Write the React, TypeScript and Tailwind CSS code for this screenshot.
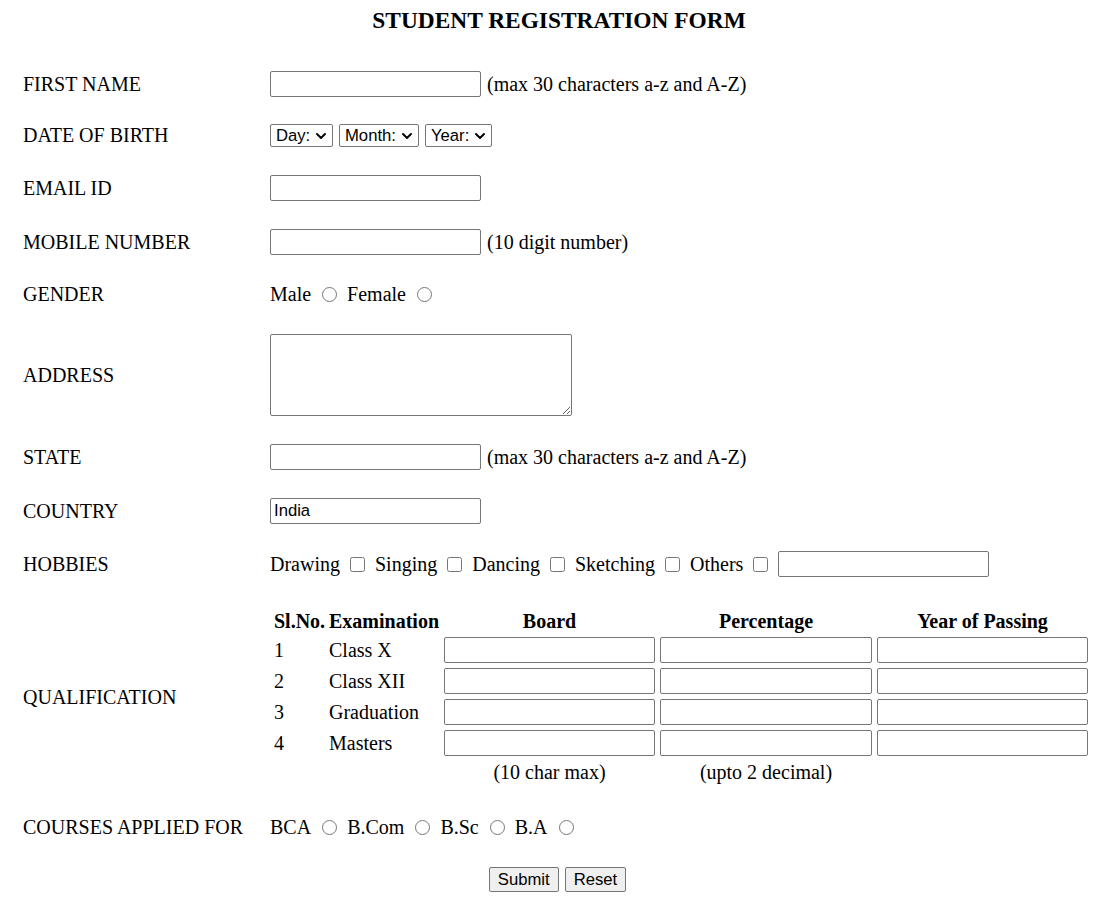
import React from "react";

const inp =
  "h-[26px] w-[211px] border border-[#767676] rounded-[2px] bg-white px-[3px] text-[16.67px] font-['Liberation_Sans',Arial,sans-serif] text-black outline-none";
const label = "w-[247px] shrink-0 text-[20px] leading-[23px]";
const radio = "ml-[11px] mr-[10px] w-[15px] h-[15px] shrink-0";
const check = "ml-[10px] mr-[10px] w-[15px] h-[15px] shrink-0";

function Sel({ text, w }: { text: string; w: string }) {
  return (
    <div className={`relative ${w} h-[23px]`}>
      <select
        className="w-full h-full appearance-none border border-[#767676] rounded-[2px] bg-white pl-[5px] text-[16.67px] leading-[21px] font-['Liberation_Sans',Arial,sans-serif] text-black outline-none"
        defaultValue=""
      >
        <option value="">{text}</option>
      </select>
      <svg
        className="pointer-events-none absolute right-[7px] top-[9px]"
        width="10"
        height="6"
        viewBox="0 0 10 6"
      >
        <path d="M1 1 L5 5 L9 1" fill="none" stroke="#000" strokeWidth="1.9" strokeLinecap="round" strokeLinejoin="round" />
      </svg>
    </div>
  );
}

export default function App() {
  const quals = ["Class X", "Class XII", "Graduation", "Masters"];
  return (
    <div className="min-h-[898px] bg-white text-black font-['Liberation_Serif','Times_New_Roman',serif]">
      <div className="ml-[23px] w-[1069px] flex flex-col">
        <h3 className="mt-[7px] ml-[3px] text-center text-[23.4px] leading-[26px] font-bold">
          STUDENT REGISTRATION FORM
        </h3>

        <div className="flex items-center h-[30px] mt-[36px]">
          <div className={label}>FIRST NAME</div>
          <div className="flex items-center text-[20px]">
            <input className={inp} />
            <span className="ml-[6px]">(max 30 characters a-z and A-Z)</span>
          </div>
        </div>

        <div className="flex items-center h-[30px] mt-[21px]">
          <div className={label}>DATE OF BIRTH</div>
          <div className="flex items-center gap-[6px]">
            <Sel text="Day:" w="w-[63px]" />
            <Sel text="Month:" w="w-[80px]" />
            <Sel text="Year:" w="w-[67px]" />
          </div>
        </div>

        <div className="flex items-center h-[30px] mt-[23px]">
          <div className={label}>EMAIL ID</div>
          <input className={inp} />
        </div>

        <div className="flex items-center h-[30px] mt-[24px]">
          <div className={label}>MOBILE NUMBER</div>
          <div className="flex items-center text-[20px]">
            <input className={inp} />
            <span className="ml-[6px]">(10 digit number)</span>
          </div>
        </div>

        <div className="flex items-center h-[30px] mt-[22px]">
          <div className={label}>GENDER</div>
          <div className="flex items-center text-[20px] leading-[23px]">
            <span>Male</span>
            <input type="radio" name="gender" className={radio} />
            <span>Female</span>
            <input type="radio" name="gender" className={radio} />
          </div>
        </div>

        <div className="flex items-center h-[84px] mt-[24px]">
          <div className={label}>ADDRESS</div>
          <textarea className="w-[302px] h-[82px] border border-[#767676] rounded-[2px] bg-white p-[3px] text-[16.67px] font-['Liberation_Mono',monospace] outline-none resize" />
        </div>

        <div className="flex items-center h-[30px] mt-[25px]">
          <div className={label}>STATE</div>
          <div className="flex items-center text-[20px]">
            <input className={inp} />
            <span className="ml-[6px]">(max 30 characters a-z and A-Z)</span>
          </div>
        </div>

        <div className="flex items-center h-[30px] mt-[24px]">
          <div className={label}>COUNTRY</div>
          <input className={inp} defaultValue="India" />
        </div>

        <div className="flex items-center h-[30px] mt-[23px]">
          <div className={label}>HOBBIES</div>
          <div className="flex items-center text-[20px] leading-[23px]">
            <span>Drawing</span>
            <input type="checkbox" className={check} />
            <span>Singing</span>
            <input type="checkbox" className={check} />
            <span>Dancing</span>
            <input type="checkbox" className={check} />
            <span>Sketching</span>
            <input type="checkbox" className={check} />
            <span>Others</span>
            <input type="checkbox" className="ml-[10px] mr-[10px] w-[15px] h-[15px] shrink-0" />
            <input className={inp} />
          </div>
        </div>

        <div className="flex items-center h-[176px] mt-[30px]">
          <div className={label}>QUALIFICATION</div>
          <div className="ml-[4px] grid grid-cols-[50px_110px_211px_212px_211px] gap-x-[5px] text-[20px] leading-[23px] items-center">
            <div className="font-bold">Sl.No.</div>
            <div className="font-bold">Examination</div>
            <div className="font-bold text-center">Board</div>
            <div className="font-bold text-center">Percentage</div>
            <div className="font-bold text-center">Year of Passing</div>
            {quals.map((q, i) => (
              <React.Fragment key={q}>
                <div className={i === 0 ? "mt-[4px]" : "mt-[5px]"}>{i + 1}</div>
                <div className={i === 0 ? "mt-[4px]" : "mt-[5px]"}>{q}</div>
                <input className={`${inp} w-full ${i === 0 ? "mt-[4px]" : "mt-[5px]"}`} />
                <input className={`${inp} w-full ${i === 0 ? "mt-[4px]" : "mt-[5px]"}`} />
                <input className={`${inp} w-full ${i === 0 ? "mt-[4px]" : "mt-[5px]"}`} />
              </React.Fragment>
            ))}
            <div className="mt-[5px]"></div>
            <div className="mt-[5px]"></div>
            <div className="mt-[5px] text-center">(10 char max)</div>
            <div className="mt-[5px] text-center">(upto 2 decimal)</div>
            <div className="mt-[5px]"></div>
          </div>
        </div>

        <div className="flex items-center h-[30px] mt-[27px]">
          <div className={label}>COURSES APPLIED FOR</div>
          <div className="flex items-center text-[20px] leading-[23px]">
            <span>BCA</span>
            <input type="radio" name="course" className={radio} />
            <span>B.Com</span>
            <input type="radio" name="course" className={radio} />
            <span>B.Sc</span>
            <input type="radio" name="course" className={radio} />
            <span>B.A</span>
            <input type="radio" name="course" className={radio} />
          </div>
        </div>

        <div className="flex justify-center gap-[6px] mt-[25px]">
          <button className="h-[25px] px-[8px] border border-[#767676] rounded-[2px] bg-[#efefef] text-[16.67px] leading-[21px] font-['Liberation_Sans',Arial,sans-serif] text-black">
            Submit
          </button>
          <button className="h-[25px] px-[8px] border border-[#767676] rounded-[2px] bg-[#efefef] text-[16.67px] leading-[21px] font-['Liberation_Sans',Arial,sans-serif] text-black">
            Reset
          </button>
        </div>
      </div>
    </div>
  );
}
